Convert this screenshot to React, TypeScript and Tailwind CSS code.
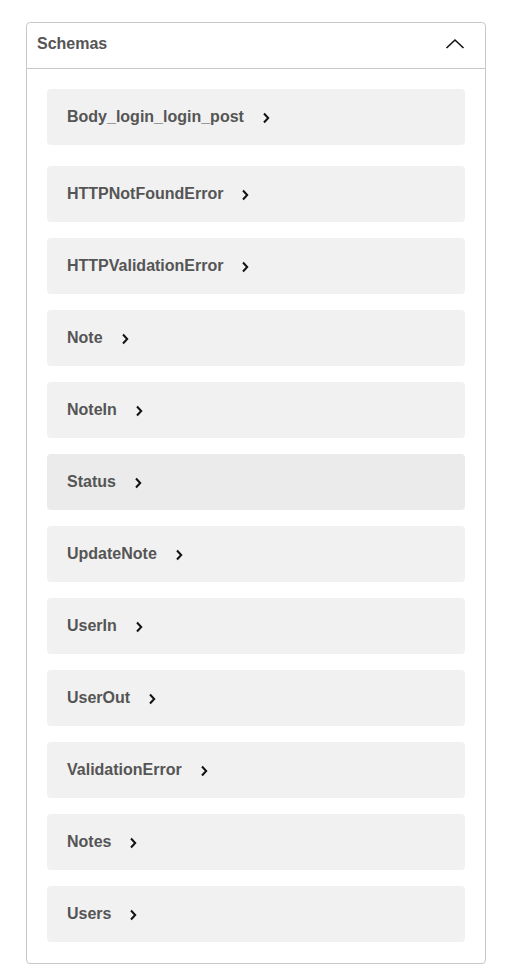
import React from 'react';

const schemas = [
  'Body_login_login_post',
  'HTTPNotFoundError',
  'HTTPValidationError',
  'Note',
  'NoteIn',
  'Status',
  'UpdateNote',
  'UserIn',
  'UserOut',
  'ValidationError',
  'Notes',
  'Users',
];

const ChevronRight: React.FC = () => (
  <svg width="8" height="12" viewBox="0 0 8 12" className="shrink-0 mt-[2px]">
    <polyline points="2,1.5 6.2,6 2,10.5" fill="none" stroke="#111" strokeWidth="2" />
  </svg>
);

const ChevronUp: React.FC = () => (
  <svg width="20" height="12" viewBox="0 0 20 12">
    <polyline points="1.5,10 10,2 18.5,10" fill="none" stroke="#111" strokeWidth="1.6" />
  </svg>
);

const App: React.FC = () => {
  return (
    <div className="min-h-screen bg-white pt-[22px] pl-[26px]" style={{ fontFamily: '"Liberation Sans", Arial, sans-serif' }}>
      <section className="w-[460px] border border-[#c8c8c8] rounded">
        <div className="h-[46px] flex items-center justify-between pl-[10px] pr-[20px] pb-[4px] border-b border-[#c8c8c8]">
          <h4 className="text-[16px] font-bold text-[#555555]">Schemas</h4>
          <ChevronUp />
        </div>
        <div className="px-[20px] pt-[20px] pb-[21px] flex flex-col gap-[16px]">
          {schemas.map((name, i) => (
            <div
              key={name}
              className={`h-[56px] rounded flex items-center gap-[18px] pl-[20px] ${
                name === 'Status' ? 'bg-[#ebebeb]' : 'bg-[#f1f1f1]'
              } ${i === 1 ? 'mt-[5px]' : ''}`}
            >
              <span className="text-[16px] font-bold text-[#555555]">{name}</span>
              <ChevronRight />
            </div>
          ))}
        </div>
      </section>
    </div>
  );
};

export default App;
